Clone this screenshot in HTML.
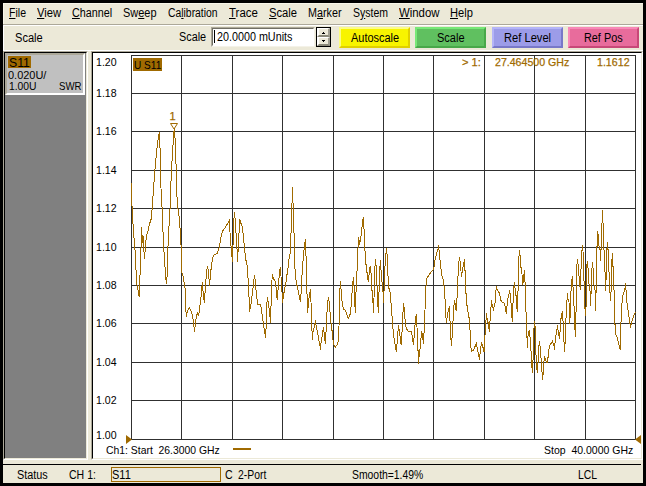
<!DOCTYPE html>
<html lang="en"><head><meta charset="utf-8"><title>Network Analyzer - S11 SWR</title>
<style>
html,body{margin:0;padding:0;background:#000;}
body{width:646px;height:486px;position:relative;overflow:hidden;font-family:"Liberation Sans",sans-serif;}
.win{position:absolute;left:3px;top:3px;width:640px;height:480px;background:#ece9d8;}
.abs{position:absolute;}
.t{position:absolute;white-space:nowrap;transform-origin:0 0;line-height:normal;display:block;}
.t u{text-decoration:underline;text-underline-offset:1px;}
.o{-webkit-text-stroke:0.25px currentColor;}
.plot{position:absolute;left:0;top:0;}
.btn{position:absolute;top:27px;height:17px;width:67px;border-style:solid;border-width:2px;}
.sunk-o{box-sizing:border-box;border:1px solid;border-color:#aca899 #fff #fff #aca899;}
.sunk-i{box-sizing:border-box;border:1px solid;border-color:#000 #ece9d8 #ece9d8 #000;}
.spin{background:#ece9d8;box-sizing:border-box;border-style:solid;border-width:1px 2px 2px 2px;border-color:#fff #a09e90 #8a8878 #fff;}
</style></head><body>
<div class="win"></div>
<div class="abs" style="left:3px;top:3px;width:640px;height:1px;background:#f7f5e8"></div>
<div class="abs" style="left:3px;top:3px;width:1px;height:22px;background:#f7f5e8"></div>

<nav id="menubar">
<span class="t " style="left:8.93px;top:6.00px;font-size:12px;color:#000;transform:scaleX(0.8778)"><u>F</u>ile</span>
<span class="t " style="left:36.59px;top:6.00px;font-size:12px;color:#000;transform:scaleX(0.9373)"><u>V</u>iew</span>
<span class="t " style="left:71.81px;top:6.00px;font-size:12px;color:#000;transform:scaleX(0.8988)"><u>C</u>hannel</span>
<span class="t " style="left:123.31px;top:6.00px;font-size:12px;color:#000;transform:scaleX(0.9126)">Sw<u>e</u>ep</span>
<span class="t " style="left:168.23px;top:6.00px;font-size:12px;color:#000;transform:scaleX(0.8641)">Ca<u>l</u>ibration</span>
<span class="t " style="left:229.08px;top:6.00px;font-size:12px;color:#000;transform:scaleX(0.9552)"><u>T</u>race</span>
<span class="t " style="left:268.89px;top:6.00px;font-size:12px;color:#000;transform:scaleX(0.9355)"><u>S</u>cale</span>
<span class="t " style="left:308.32px;top:6.00px;font-size:12px;color:#000;transform:scaleX(0.8965)">M<u>a</u>rker</span>
<span class="t " style="left:353.13px;top:6.00px;font-size:12px;color:#000;transform:scaleX(0.8745)">S<u>y</u>stem</span>
<span class="t " style="left:398.79px;top:6.00px;font-size:12px;color:#000;transform:scaleX(0.9483)"><u>W</u>indow</span>
<span class="t " style="left:450.00px;top:6.00px;font-size:12px;color:#000;transform:scaleX(0.9268)"><u>H</u>elp</span>
<div class="abs" style="left:3px;top:24px;width:640px;height:1px;background:#aca899"></div>
<div class="abs" style="left:3px;top:25px;width:640px;height:1px;background:#fff"></div>
</nav>

<section id="toolbar">
<div class="abs" style="left:3px;top:26px;width:1px;height:25px;background:#fff"></div>
<div class="abs" style="left:3px;top:50px;width:640px;height:1px;background:#fff"></div>
<div id="scale-entry">
<div class="abs" style="left:211px;top:27px;width:104px;height:20px;background:#fff;box-sizing:border-box;border:1px solid;border-color:#aca899 #f4f2e8 #f4f2e8 #aca899;"></div>
<div class="abs" style="left:212px;top:28px;width:102px;height:18px;background:#fff;box-sizing:border-box;border:1px solid;border-color:#716f64 #fff #fff #716f64;"></div>
<div class="abs" style="left:214px;top:30px;width:1px;height:13px;background:#000"></div>
</div>
<div id="spinner">
<div class="abs" style="left:316px;top:27px;width:15px;height:20px;background:#000"></div>
<div class="abs spin" style="left:317px;top:28px;width:13px;height:9px"></div>
<div class="abs spin" style="left:317px;top:37px;width:13px;height:9px"></div>
<svg class="abs" style="left:316px;top:27px" width="15" height="20"><path d="M7 5h1v1h1v1h-3v-1h1z M6 13h3v1h-1v1h-1v-1h-1z" fill="#000" shape-rendering="crispEdges"/></svg>
</div>
<div class="btn" style="left:339px;background:#f8f400;border-color:#fcfc84 #e0d000 #e0d000 #fcfc84"></div>
<div class="btn" style="left:415px;background:#60c060;border-color:#78e878 #48a848 #48a848 #78e878"></div>
<div class="btn" style="left:492px;background:#9c9ce8;border-color:#b4b4f8 #7878c8 #7878c8 #b4b4f8"></div>
<div class="btn" style="left:568px;background:#e86c9c;border-color:#f888b8 #c84878 #c84878 #f888b8"></div>
<span class="t " style="left:15.00px;top:30.70px;font-size:12px;color:#000;transform:scaleX(0.9222)">Scale</span>
<span class="t " style="left:179.41px;top:30.00px;font-size:12px;color:#000;transform:scaleX(0.9022)">Scale</span>
<span class="t " style="left:217.22px;top:30.00px;font-size:12px;color:#000;transform:scaleX(0.8970)">20.0000 mUnits</span>
<span class="t " style="left:350.51px;top:31.00px;font-size:12px;color:#000;transform:scaleX(0.9126)">Autoscale</span>
<span class="t " style="left:437.00px;top:31.00px;font-size:12px;color:#000;transform:scaleX(0.9189)">Scale</span>
<span class="t " style="left:504.00px;top:31.00px;font-size:12px;color:#000;transform:scaleX(0.9288)">Ref Level</span>
<span class="t " style="left:584.01px;top:31.00px;font-size:12px;color:#000;transform:scaleX(0.9041)">Ref Pos</span>
</section>

<aside id="trace-list">
<div class="abs sunk-o" style="left:3px;top:51px;width:85px;height:409px;background:#808080"></div>
<div class="abs sunk-i" style="left:4px;top:52px;width:83px;height:407px"></div>
<div class="abs" style="left:5px;top:53px;width:80px;height:42px;background:#c0c0c0;box-sizing:border-box;border:2px solid;border-color:#aca899 #fff #fff #aca899"></div>
<div class="abs" style="left:8px;top:56px;width:23px;height:12px;background:#a06a00"></div>
<span class="t " style="left:8.85px;top:55.80px;font-size:12px;color:#000;transform:scaleX(1.0209)">S11</span>
<span class="t " style="left:8.31px;top:68.70px;font-size:11px;color:#000;transform:scaleX(0.9955)">0.020U/</span>
<span class="t " style="left:9.24px;top:79.60px;font-size:11px;color:#000;transform:scaleX(0.9392)">1.00U</span>
<span class="t " style="left:59.47px;top:79.60px;font-size:11px;color:#000;transform:scaleX(0.8766)">SWR</span>
</aside>

<main id="chart">
<div class="abs sunk-o" style="left:91px;top:51px;width:552px;height:409px;background:#fff"></div>
<div class="abs sunk-i" style="left:92px;top:52px;width:550px;height:407px"></div>
<div class="abs" style="left:133px;top:58px;width:29px;height:13px;background:#a06a00"></div>
<svg class="plot" width="646" height="486" viewBox="0 0 646 486">
<g fill="#303030" shape-rendering="crispEdges">
<rect x="131" y="55" width="1" height="385"/>
<rect x="181" y="55" width="1" height="385"/>
<rect x="232" y="55" width="1" height="385"/>
<rect x="282" y="55" width="1" height="385"/>
<rect x="333" y="55" width="1" height="385"/>
<rect x="383" y="55" width="1" height="385"/>
<rect x="433" y="55" width="1" height="385"/>
<rect x="484" y="55" width="1" height="385"/>
<rect x="534" y="55" width="1" height="385"/>
<rect x="585" y="55" width="1" height="385"/>
<rect x="635" y="55" width="1" height="385"/>
<rect x="131" y="55" width="505" height="1"/>
<rect x="131" y="93" width="505" height="1"/>
<rect x="131" y="131" width="505" height="1"/>
<rect x="131" y="170" width="505" height="1"/>
<rect x="131" y="208" width="505" height="1"/>
<rect x="131" y="247" width="505" height="1"/>
<rect x="131" y="285" width="505" height="1"/>
<rect x="131" y="323" width="505" height="1"/>
<rect x="131" y="362" width="505" height="1"/>
<rect x="131" y="400" width="505" height="1"/>
<rect x="131" y="439" width="505" height="1"/>
</g>
<polyline points="131.5,183.0 131.6,194.0 132.3,214.0 133.1,225.0 134.0,238.0 135.4,255.0 136.1,272.0 136.8,284.0 137.8,289.0 139.3,297.0 139.6,279.0 140.5,270.0 141.5,227.0 142.5,243.0 143.0,236.0 144.5,259.0 146.0,240.0 146.5,235.0 148.0,231.0 149.0,226.0 150.3,221.5 151.5,218.0 152.5,203.0 154.5,175.0 156.0,158.0 157.6,142.2 159.3,132.0 160.2,152.5 161.0,188.3 161.9,203.0 162.4,220.0 164.2,255.0 165.6,275.0 166.3,283.6 167.5,273.0 167.5,256.0 169.3,220.0 170.4,203.0 171.3,171.2 172.5,154.2 173.5,137.0 174.3,128.0 175.5,145.6 176.4,178.0 177.2,203.0 179.5,220.0 180.5,235.0 181.3,250.0 181.5,271.0 183.1,276.0 184.7,285.9 185.6,293.3 185.6,307.4 186.4,316.7 187.4,311.1 189.3,308.0 191.1,311.1 192.4,315.4 193.4,321.6 194.5,331.5 195.5,322.9 196.5,316.0 197.6,313.0 198.6,315.4 199.6,309.9 200.4,300.0 200.8,299.5 202.3,282.2 203.5,297.0 204.5,302.6 205.4,285.3 206.6,272.3 207.5,266.1 208.5,272.3 209.5,285.9 210.7,272.3 211.6,264.2 212.8,257.4 214.0,255.0 217.2,253.5 219.4,247.0 220.9,237.2 222.7,231.0 225.8,226.6 229.3,220.4 230.5,240.9 231.8,254.5 232.6,262.4 233.5,224.8 234.5,212.1 235.4,222.3 236.3,237.2 237.2,252.0 237.3,261.8 238.2,249.5 239.2,229.7 239.7,219.2 240.7,222.9 242.3,226.6 243.4,235.9 244.4,247.0 245.6,258.7 247.5,267.3 248.1,279.7 248.7,290.9 249.3,302.0 249.6,312.3 250.5,306.0 251.2,303.3 252.4,293.3 253.7,282.2 254.3,275.4 255.5,281.0 256.0,290.0 256.9,298.6 257.7,304.1 260.6,304.8 261.4,309.7 262.4,317.2 263.4,323.3 264.3,329.5 265.5,337.6 266.1,327.0 266.5,307.2 267.4,297.3 268.4,303.5 269.6,312.2 270.5,323.3 270.9,311.0 271.5,287.4 272.3,275.2 273.6,278.9 275.4,281.4 276.0,287.0 277.3,300.4 278.3,286.2 279.4,273.3 280.4,267.2 281.0,276.4 282.0,292.4 282.5,302.9 283.7,294.2 284.7,288.7 286.0,282.0 287.0,274.6 288.2,267.2 289.0,259.1 290.5,251.0 290.5,233.5 291.5,232.5 291.5,203.5 292.4,202.5 292.5,187.2 292.6,202.5 293.5,203.5 293.5,232.5 294.5,233.5 294.5,262.8 295.9,279.5 297.5,288.2 298.3,291.1 299.3,296.1 300.4,301.7 301.1,292.4 301.8,277.7 302.7,265.3 303.5,254.8 304.5,245.5 305.4,238.9 305.6,254.0 306.6,258.5 306.9,290.0 307.6,313.4 308.5,301.0 309.5,294.9 310.4,289.3 311.0,302.3 311.7,323.3 312.4,340.4 313.2,329.0 314.4,327.0 315.4,320.2 316.3,327.0 317.5,332.0 318.8,340.0 320.4,347.2 321.7,338.6 323.5,327.4 324.8,338.6 325.4,344.1 326.0,332.4 326.6,321.0 327.4,304.8 328.4,297.1 329.3,303.5 330.3,315.9 331.2,324.6 332.4,333.3 332.8,338.6 333.7,344.1 335.3,347.5 337.8,343.5 338.6,338.6 339.0,327.4 339.3,297.2 340.5,281.1 341.4,295.3 342.4,304.6 343.6,309.0 345.5,310.2 346.7,313.9 348.3,318.5 349.8,315.8 350.8,309.6 351.7,297.8 352.5,284.8 353.5,277.1 354.1,287.3 354.8,303.4 355.4,313.3 355.8,300.9 356.4,276.1 357.2,270.0 357.2,249.6 358.2,247.2 358.5,237.2 359.7,243.4 360.6,239.7 361.6,231.7 362.4,222.4 363.4,217.2 363.7,228.6 364.7,229.8 364.7,250.9 365.7,251.5 365.7,264.5 366.5,265.1 366.9,271.8 368.4,282.3 369.4,271.2 370.2,266.3 371.2,274.9 371.7,289.1 372.7,293.5 373.3,312.7 374.0,298.4 374.6,273.7 375.4,259.2 376.4,268.2 377.1,287.3 378.3,312.7 378.9,296.0 379.5,273.7 380.4,260.2 381.0,270.0 382.0,282.3 383.3,294.7 383.6,303.4 384.5,276.1 385.4,258.3 386.6,247.8 387.3,258.3 387.5,275.9 388.7,276.5 388.7,288.3 389.7,288.9 390.7,299.7 391.2,305.0 391.8,313.0 392.7,326.0 393.7,336.0 394.9,343.4 396.4,351.8 397.0,344.6 397.6,333.5 398.6,327.3 399.6,331.0 400.5,341.5 401.3,344.6 401.7,334.1 402.6,327.3 402.8,314.5 403.7,303.1 404.8,316.1 405.4,323.6 406.3,328.5 407.9,331.0 411.6,331.4 412.5,338.4 413.5,344.6 414.3,334.7 415.3,321.1 416.3,313.9 417.0,327.3 417.6,342.2 418.1,352.1 418.4,364.4 419.3,353.3 420.3,347.1 420.9,338.4 421.9,332.2 422.8,337.2 423.4,343.6 424.0,333.5 424.6,323.6 425.0,310.6 425.2,295.0 425.9,288.3 426.5,278.3 427.7,277.1 431.4,271.5 433.5,269.7 434.3,266.0 435.2,258.5 437.0,252.3 438.5,247.1 439.5,252.3 440.1,261.6 441.3,270.9 442.2,277.1 443.5,279.6 444.1,287.0 444.8,287.6 444.8,295.0 445.3,305.0 445.7,314.3 446.5,323.0 447.3,314.9 448.4,310.0 449.4,306.0 449.8,316.1 450.6,334.7 451.5,345.6 452.1,336.6 452.9,323.6 453.5,308.6 454.7,300.5 455.3,304.9 456.2,311.0 456.8,301.8 457.2,295.0 457.7,284.0 458.4,266.0 459.5,257.3 460.5,264.8 461.4,276.5 462.4,271.0 463.4,264.8 464.5,259.2 464.9,270.3 465.7,271.6 465.7,293.3 466.7,294.5 467.1,308.6 468.3,313.5 469.2,318.5 469.8,327.2 470.6,338.0 470.6,343.7 471.4,351.1 473.7,349.9 474.9,346.8 476.4,343.4 477.4,348.6 478.4,354.8 479.5,359.5 480.5,348.6 481.7,343.4 483.0,347.4 484.2,352.3 484.8,342.4 485.3,325.9 486.5,315.4 487.5,319.7 488.4,324.7 489.4,331.5 490.0,321.0 490.6,309.8 491.7,302.4 492.7,306.7 493.7,309.8 494.3,304.9 495.2,302.4 495.6,293.5 496.4,287.3 497.7,290.4 499.3,293.1 500.5,298.7 501.4,301.8 503.9,303.0 505.1,306.1 506.3,313.5 507.2,303.6 508.2,296.8 509.7,291.1 510.7,297.4 511.3,308.6 512.3,321.6 512.9,306.1 513.4,292.5 514.4,282.4 515.3,290.8 516.3,297.4 516.6,307.3 517.5,311.7 517.9,297.4 518.1,285.8 518.5,266.0 519.3,249.9 520.2,256.1 520.8,267.2 521.8,268.5 522.2,279.6 522.8,285.2 523.7,275.9 524.6,270.1 524.9,282.1 525.8,283.3 525.9,308.7 526.8,333.4 527.4,347.7 528.0,335.9 529.3,329.7 530.2,338.4 531.1,352.0 531.8,364.8 532.4,372.8 533.4,352.4 533.6,334.7 534.5,321.0 535.5,331.0 535.5,346.2 536.5,363.5 537.3,373.4 538.0,363.5 538.6,348.7 539.4,341.2 540.4,348.7 541.3,362.3 542.0,372.2 542.5,379.6 543.3,372.2 543.9,362.3 544.5,357.3 545.8,360.4 547.0,363.3 547.9,358.6 548.7,351.1 549.7,345.7 552.4,341.3 553.4,344.0 554.4,347.8 555.5,339.6 556.5,331.0 557.5,327.2 558.4,332.2 559.4,339.0 560.2,329.7 561.1,317.3 562.5,311.4 563.1,322.3 564.0,342.1 564.6,351.5 565.2,340.9 565.8,322.3 566.8,303.1 567.4,293.3 568.3,301.0 569.0,302.0 569.5,323.5 570.2,316.1 570.5,299.5 571.4,284.6 572.4,276.0 573.0,287.1 573.5,300.0 574.1,307.4 574.7,326.0 575.5,336.5 576.0,317.3 576.1,279.0 577.3,259.2 578.3,265.4 578.6,274.7 579.6,278.4 580.2,290.2 580.8,278.4 581.3,257.4 582.5,245.2 583.5,257.4 583.5,280.3 584.4,281.5 584.4,303.1 585.6,315.5 586.3,301.2 586.4,274.7 587.2,261.1 588.2,269.8 588.9,284.0 589.7,284.6 590.3,297.0 590.3,305.6 591.0,294.5 591.6,273.5 592.4,262.3 593.4,271.6 594.1,287.1 595.3,290.8 595.5,310.5 596.2,287.1 596.2,251.2 596.9,250.7 597.4,230.9 598.4,236.5 599.0,245.8 599.9,247.0 600.5,260.5 601.1,247.5 601.5,223.5 602.4,222.5 602.5,210.1 602.6,222.5 603.5,223.5 603.5,248.3 604.3,251.3 605.2,277.2 605.4,290.8 606.2,277.2 606.7,253.7 607.4,242.1 608.3,253.0 608.7,271.6 609.5,272.9 609.8,290.8 610.8,301.3 611.1,288.3 611.6,265.4 612.4,253.0 613.0,266.7 613.6,267.3 614.1,294.5 614.3,304.8 614.8,320.2 615.5,334.5 617.3,337.2 618.6,343.5 620.3,349.7 620.6,336.3 621.4,309.8 622.6,296.8 624.2,291.2 625.4,285.9 626.3,291.9 626.9,302.3 628.4,312.2 629.4,319.6 630.4,326.6 631.9,321.5 633.7,315.9 635.6,312.2" fill="none" stroke="#a06a00" stroke-width="1" stroke-linejoin="miter" stroke-miterlimit="6" shape-rendering="crispEdges"/>
<path d="M170.5 123.5 H177.5 L174 129 Z" fill="none" stroke="#a06a00" stroke-width="1"/>
<path d="M126 435 L132 439.5 L126 444 Z" fill="#a06a00"/>
<path d="M641 435 L635 439.5 L641 444 Z" fill="#a06a00"/>
<rect x="233" y="448" width="18" height="2" fill="#a06a00" shape-rendering="crispEdges"/>
</svg>
<span class="t " style="left:95.92px;top:56.20px;font-size:11px;color:#000;transform:scaleX(0.9605)">1.20</span>
<span class="t " style="left:95.92px;top:87.00px;font-size:11px;color:#000;transform:scaleX(0.9605)">1.18</span>
<span class="t " style="left:95.92px;top:125.00px;font-size:11px;color:#000;transform:scaleX(0.9605)">1.16</span>
<span class="t " style="left:95.92px;top:164.00px;font-size:11px;color:#000;transform:scaleX(0.9605)">1.14</span>
<span class="t " style="left:95.92px;top:202.00px;font-size:11px;color:#000;transform:scaleX(0.9605)">1.12</span>
<span class="t " style="left:95.92px;top:241.00px;font-size:11px;color:#000;transform:scaleX(0.9605)">1.10</span>
<span class="t " style="left:95.92px;top:279.00px;font-size:11px;color:#000;transform:scaleX(0.9605)">1.08</span>
<span class="t " style="left:95.92px;top:317.00px;font-size:11px;color:#000;transform:scaleX(0.9605)">1.06</span>
<span class="t " style="left:95.92px;top:356.00px;font-size:11px;color:#000;transform:scaleX(0.9605)">1.04</span>
<span class="t " style="left:95.92px;top:394.00px;font-size:11px;color:#000;transform:scaleX(0.9605)">1.02</span>
<span class="t " style="left:95.92px;top:429.00px;font-size:11px;color:#000;transform:scaleX(0.9605)">1.00</span>
<span class="t " style="left:133.75px;top:59.30px;font-size:11px;color:#000;transform:scaleX(0.9163)">U S11</span>
<span class="t o" style="left:461.60px;top:56.00px;font-size:11px;color:#a06a00;transform:scaleX(1.0117)">> 1:</span>
<span class="t o" style="left:495.42px;top:56.00px;font-size:11px;color:#a06a00;transform:scaleX(0.9632)">27.464500 GHz</span>
<span class="t o" style="left:597.22px;top:56.00px;font-size:11px;color:#a06a00;transform:scaleX(0.9674)">1.1612</span>
<span class="t o" style="left:169.6px;top:109.8px;font-size:11px;color:#a06a00">1</span>
<span class="t " style="left:105.63px;top:444.00px;font-size:11px;color:#000;transform:scaleX(0.9447)">Ch1: Start &nbsp;26.3000 GHz</span>
<span class="t " style="left:544.23px;top:444.00px;font-size:11px;color:#000;transform:scaleX(0.9534)">Stop &nbsp;40.0000 GHz</span>
</main>

<footer id="statusbar">
<div class="abs" style="left:3px;top:464px;width:638px;height:1px;background:#000"></div>
<div class="abs" style="left:111px;top:467px;width:110px;height:15px;box-sizing:border-box;border:1px solid #a06a00"></div>
<span class="t " style="left:17.11px;top:467.60px;font-size:12px;color:#000;transform:scaleX(0.9053)">Status</span>
<span class="t " style="left:68.92px;top:467.60px;font-size:12px;color:#000;transform:scaleX(0.8796)">CH 1:</span>
<span class="t " style="left:111.80px;top:467.60px;font-size:12px;color:#000;transform:scaleX(0.9182)">S11</span>
<span class="t " style="left:224.92px;top:467.60px;font-size:12px;color:#000;transform:scaleX(0.8856)">C</span>
<span class="t " style="left:238.33px;top:467.60px;font-size:12px;color:#000;transform:scaleX(0.8656)">2-Port</span>
<span class="t " style="left:352.13px;top:467.60px;font-size:12px;color:#000;transform:scaleX(0.8653)">Smooth=1.49%</span>
<span class="t " style="left:578.13px;top:467.60px;font-size:12px;color:#000;transform:scaleX(0.8667)">LCL</span>
</footer>
</body></html>
